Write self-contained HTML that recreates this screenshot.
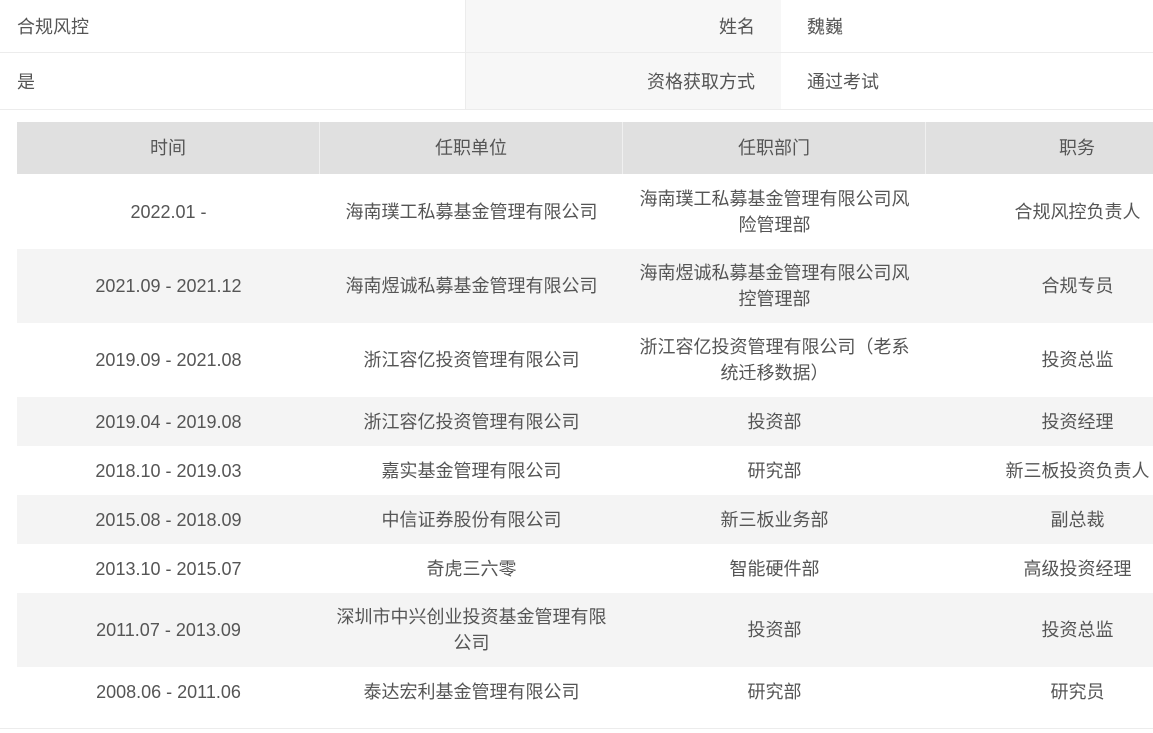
<!DOCTYPE html>
<html><head><meta charset="utf-8"><style>
*{margin:0;padding:0;box-sizing:border-box}
body{width:1153px;height:733px;overflow:hidden;background:#fff;font-family:"Liberation Sans","Noto Sans CJK SC",sans-serif;font-size:18px;color:#555;position:relative}
.r{position:absolute;left:0;width:1153px;border-bottom:1px solid #ececec}
.c{position:absolute;top:0;height:100%;display:flex;align-items:center}
.tb{position:absolute;left:17px;width:1212px}
.row{position:absolute;left:0;width:1212px;display:flex}
.row>div{width:303px;display:flex;align-items:center;justify-content:center;text-align:center;line-height:26px;padding:0 14px}
.hd>div{border-right:1px solid #f0f0f0}
</style></head><body>
<div class="r" style="top:0;height:53px">
 <div class="c" style="left:17px">合规风控</div>
 <div class="c" style="left:465px;width:316px;background:#f7f7f7;border-left:1px solid #ececec;justify-content:flex-end;padding-right:26px">姓名</div>
 <div class="c" style="left:807px">魏巍</div>
</div>
<div class="r" style="top:53px;height:57px">
 <div class="c" style="left:17px">是</div>
 <div class="c" style="left:465px;width:316px;background:#f7f7f7;border-left:1px solid #ececec;justify-content:flex-end;padding-right:26px">资格获取方式</div>
 <div class="c" style="left:807px">通过考试</div>
</div>
<div class="tb" style="top:122px">
 <div class="row hd" style="top:0;height:52px;background:#e0e0e0"><div>时间</div><div>任职单位</div><div>任职部门</div><div>职务</div></div>
 <div class="row" style="top:52px;height:75px"><div>2022.01 -</div><div>海南璞工私募基金管理有限公司</div><div>海南璞工私募基金管理有限公司风险管理部</div><div>合规风控负责人</div></div>
 <div class="row" style="top:127px;height:74px;background:#f4f4f4"><div>2021.09 - 2021.12</div><div>海南煜诚私募基金管理有限公司</div><div>海南煜诚私募基金管理有限公司风控管理部</div><div>合规专员</div></div>
 <div class="row" style="top:201px;height:74px"><div>2019.09 - 2021.08</div><div>浙江容亿投资管理有限公司</div><div>浙江容亿投资管理有限公司（老系统迁移数据）</div><div>投资总监</div></div>
 <div class="row" style="top:275px;height:49px;background:#f4f4f4"><div>2019.04 - 2019.08</div><div>浙江容亿投资管理有限公司</div><div>投资部</div><div>投资经理</div></div>
 <div class="row" style="top:324px;height:49px"><div>2018.10 - 2019.03</div><div>嘉实基金管理有限公司</div><div>研究部</div><div>新三板投资负责人</div></div>
 <div class="row" style="top:373px;height:49px;background:#f4f4f4"><div>2015.08 - 2018.09</div><div>中信证券股份有限公司</div><div>新三板业务部</div><div>副总裁</div></div>
 <div class="row" style="top:422px;height:49px"><div>2013.10 - 2015.07</div><div>奇虎三六零</div><div>智能硬件部</div><div>高级投资经理</div></div>
 <div class="row" style="top:471px;height:74px;background:#f4f4f4"><div>2011.07 - 2013.09</div><div>深圳市中兴创业投资基金管理有限公司</div><div>投资部</div><div>投资总监</div></div>
 <div class="row" style="top:545px;height:49px"><div>2008.06 - 2011.06</div><div>泰达宏利基金管理有限公司</div><div>研究部</div><div>研究员</div></div>
</div>
<div style="position:absolute;left:0;top:728px;width:1153px;border-top:1px solid #ececec"></div>
</body></html>
